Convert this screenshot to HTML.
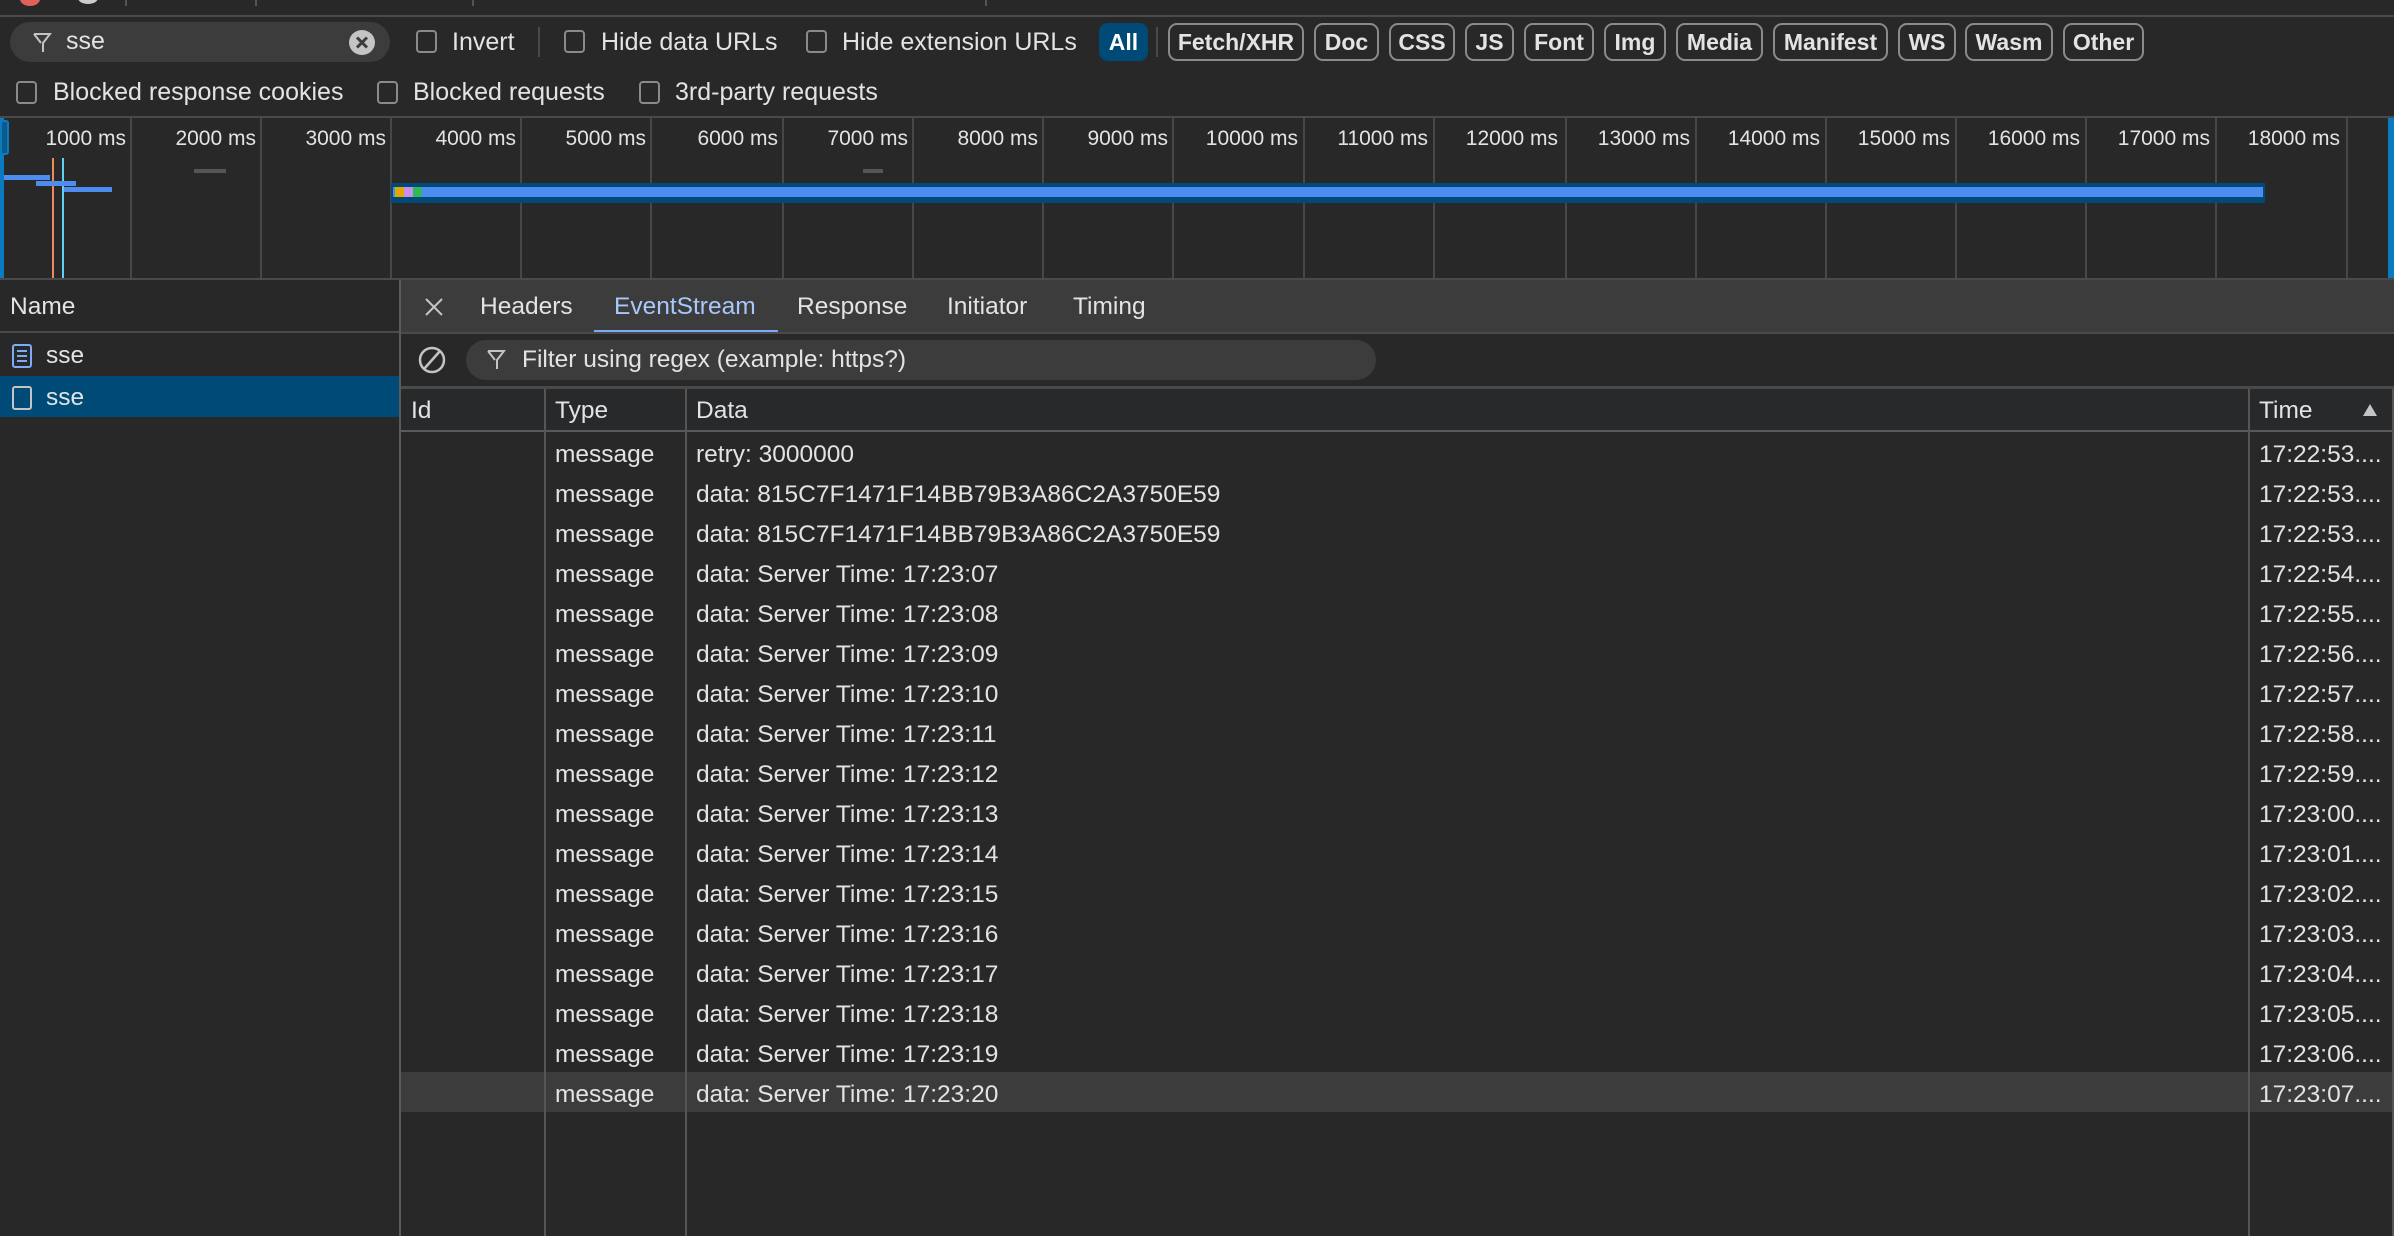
<!DOCTYPE html>
<html><head><meta charset="utf-8">
<style>
*{box-sizing:border-box;margin:0;padding:0}
body{width:2394px;height:1236px;background:#282828;color:#e3e3e3;font-family:"Liberation Sans",Helvetica,Arial,sans-serif;font-size:24.5px;position:relative;overflow:hidden}
.a{position:absolute}
.cb{position:absolute;width:21px;height:23px;border:2px solid #8a8a8a;border-radius:4px}
.t{position:absolute;white-space:nowrap;line-height:1}
.tb{font-size:25px}
.chip{position:absolute;top:23px;height:38px;border:2px solid #8a8a8a;border-radius:9px;font-size:23px;font-weight:bold;color:#e3e3e3;text-align:center;line-height:34px;white-space:nowrap}
.vl{position:absolute;width:2px;background:#474747}
.tick{position:absolute;top:118px;height:160px;width:2px;background:#474747}
.tl{position:absolute;top:127px;font-size:21px;color:#e3e3e3;text-align:right;width:130px;white-space:nowrap}
.row{position:absolute;left:401px;width:1993px;height:40px}
.row span{position:absolute;top:8px;white-space:nowrap}
</style></head><body>
<div class="a" style="left:0;top:0;width:2394px;height:15px;background:#282828"></div>
<div class="a" style="left:20px;top:-8px;width:20px;height:14px;border-radius:50%;background:#e0605a"></div>
<div class="a" style="left:78px;top:-8px;width:20px;height:12px;border-radius:50%;background:#ccc"></div>
<div class="a" style="left:125px;top:0;width:2px;height:6px;background:#555"></div>
<div class="a" style="left:255px;top:0;width:2px;height:6px;background:#555"></div>
<div class="a" style="left:472px;top:0;width:2px;height:6px;background:#555"></div>
<div class="a" style="left:985px;top:0;width:2px;height:6px;background:#555"></div>
<div class="a" style="left:0;top:15px;width:2394px;height:2px;background:#4a4a4a"></div>

<div class="a" style="left:10px;top:22px;width:380px;height:40px;border-radius:20px;background:#3c3c3c"></div>
<svg class="a" style="left:32px;top:32px" width="20" height="22" viewBox="0 0 20 22"><path d="M2 2h16L11 11v9M9 11L2 2" fill="none" stroke="#c4c4c4" stroke-width="2"/></svg>
<div class="t" style="left:66px;top:29px;font-size:25px">sse</div>
<div class="a" style="left:349px;top:30px;width:26px;height:25px;border-radius:50%;background:#c4c4c4"></div>
<svg class="a" style="left:349px;top:30px" width="26" height="25"><path d="M8 7.5l10 10M18 7.5l-10 10" stroke="#3c3c3c" stroke-width="3"/></svg>

<div class="cb" style="left:416px;top:30px"></div><div class="t tb" style="left:452px;top:30px">Invert</div>
<div class="a" style="left:538px;top:27px;width:2px;height:30px;background:#4a4a4a"></div>
<div class="cb" style="left:564px;top:30px"></div><div class="t tb" style="left:601px;top:30px">Hide data URLs</div>
<div class="cb" style="left:806px;top:30px"></div><div class="t tb" style="left:842px;top:30px">Hide extension URLs</div>
<div class="a" style="left:1099px;top:23px;width:49px;height:38px;border-radius:9px;background:#004a77;color:#fff;font-weight:bold;font-size:23px;text-align:center;line-height:38px">All</div>
<div class="a" style="left:1156px;top:27px;width:2px;height:30px;background:#4a4a4a"></div>
<div class="chip" style="left:1168px;width:136px">Fetch/XHR</div>
<div class="chip" style="left:1314px;width:65px">Doc</div>
<div class="chip" style="left:1389px;width:66px">CSS</div>
<div class="chip" style="left:1465px;width:49px">JS</div>
<div class="chip" style="left:1524px;width:70px">Font</div>
<div class="chip" style="left:1604px;width:62px">Img</div>
<div class="chip" style="left:1676px;width:87px">Media</div>
<div class="chip" style="left:1773px;width:115px">Manifest</div>
<div class="chip" style="left:1898px;width:58px">WS</div>
<div class="chip" style="left:1965px;width:88px">Wasm</div>
<div class="chip" style="left:2063px;width:81px">Other</div>

<div class="cb" style="left:16px;top:81px"></div><div class="t tb" style="left:53px;top:80px">Blocked response cookies</div>
<div class="cb" style="left:377px;top:81px"></div><div class="t tb" style="left:413px;top:80px">Blocked requests</div>
<div class="cb" style="left:639px;top:81px"></div><div class="t tb" style="left:675px;top:80px">3rd-party requests</div>
<div class="a" style="left:0;top:116px;width:2394px;height:2px;background:#4a4a4a"></div>

<div class="a" style="left:0;top:118px;width:4px;height:160px;background:#0b7bbf"></div>
<div class="a" style="left:0;top:120px;width:9px;height:35px;border-radius:3px;background:#0a5a8c;border:2px solid #0b7bbf"></div>
<div class="a" style="left:2388px;top:118px;width:6px;height:160px;background:#0b7bbf"></div>
<div class="tick" style="left:130px"></div><div class="tick" style="left:260px"></div><div class="tick" style="left:390px"></div><div class="tick" style="left:520px"></div><div class="tick" style="left:650px"></div><div class="tick" style="left:782px"></div><div class="tick" style="left:912px"></div><div class="tick" style="left:1042px"></div><div class="tick" style="left:1172px"></div><div class="tick" style="left:1303px"></div><div class="tick" style="left:1433px"></div><div class="tick" style="left:1565px"></div><div class="tick" style="left:1695px"></div><div class="tick" style="left:1825px"></div><div class="tick" style="left:1955px"></div><div class="tick" style="left:2085px"></div><div class="tick" style="left:2215px"></div><div class="tick" style="left:2346px"></div>
<div class="tl" style="left:-4px">1000 ms</div><div class="tl" style="left:126px">2000 ms</div><div class="tl" style="left:256px">3000 ms</div><div class="tl" style="left:386px">4000 ms</div><div class="tl" style="left:516px">5000 ms</div><div class="tl" style="left:648px">6000 ms</div><div class="tl" style="left:778px">7000 ms</div><div class="tl" style="left:908px">8000 ms</div><div class="tl" style="left:1038px">9000 ms</div><div class="tl" style="left:1168px">10000 ms</div><div class="tl" style="left:1298px">11000 ms</div><div class="tl" style="left:1428px">12000 ms</div><div class="tl" style="left:1560px">13000 ms</div><div class="tl" style="left:1690px">14000 ms</div><div class="tl" style="left:1820px">15000 ms</div><div class="tl" style="left:1950px">16000 ms</div><div class="tl" style="left:2080px">17000 ms</div><div class="tl" style="left:2210px">18000 ms</div>
<div class="a" style="left:52px;top:158px;width:2px;height:120px;background:#f08a5d"></div>
<div class="a" style="left:62px;top:158px;width:2px;height:120px;background:#5ed1f5"></div>
<div class="a" style="left:4px;top:175px;width:46px;height:5px;background:#4f8cf0"></div>
<div class="a" style="left:36px;top:181px;width:40px;height:5px;background:#4f8cf0"></div>
<div class="a" style="left:64px;top:187px;width:48px;height:5px;background:#4f8cf0"></div>
<div class="a" style="left:194px;top:169px;width:32px;height:4px;background:#555"></div>
<div class="a" style="left:863px;top:169px;width:20px;height:4px;background:#555"></div>
<div class="a" style="left:391px;top:183px;width:1874px;height:20px;background:#004a77"></div>
<div class="a" style="left:393px;top:187px;width:1870px;height:10px;background:#4f8cf0"></div>
<div class="a" style="left:395px;top:187px;width:9px;height:10px;background:#e0a800"></div>
<div class="a" style="left:404px;top:187px;width:9px;height:10px;background:#c88ef0"></div>
<div class="a" style="left:413px;top:187px;width:9px;height:10px;background:#33b859"></div>
<div class="a" style="left:0;top:278px;width:2394px;height:2px;background:#4a4a4a"></div>

<div class="t" style="left:10px;top:295px">Name</div>
<div class="a" style="left:0;top:331px;width:399px;height:2px;background:#4a4a4a"></div>
<svg class="a" style="left:12px;top:344px" width="20" height="24"><rect x="1" y="1" width="18" height="22" rx="2" fill="none" stroke="#7cacf8" stroke-width="2"/><path d="M5 7h10M5 12h10M5 17h10" stroke="#7cacf8" stroke-width="2"/></svg>
<div class="t" style="left:46px;top:344px">sse</div>
<div class="a" style="left:0;top:376px;width:399px;height:41px;background:#004a77"></div>
<svg class="a" style="left:12px;top:386px" width="20" height="24"><rect x="1" y="1" width="18" height="22" rx="2" fill="none" stroke="#c4c4c4" stroke-width="2"/></svg>
<div class="t" style="left:46px;top:386px">sse</div>
<div class="a" style="left:399px;top:280px;width:2px;height:956px;background:#5a5a5a"></div>

<div class="a" style="left:401px;top:280px;width:1993px;height:52px;background:#3c3c3c"></div>
<svg class="a" style="left:423px;top:296px" width="22" height="22"><path d="M3 3l16 16M19 3L3 19" stroke="#c4c4c4" stroke-width="2"/></svg>
<div class="t" style="left:480px;top:295px">Headers</div>
<div class="t" style="left:614px;top:295px;color:#a8c7fa">EventStream</div>
<div class="a" style="left:594px;top:330px;width:184px;height:3px;background:#7cacf8"></div>
<div class="t" style="left:797px;top:295px">Response</div>
<div class="t" style="left:947px;top:295px">Initiator</div>
<div class="t" style="left:1073px;top:295px">Timing</div>
<div class="a" style="left:401px;top:332px;width:1993px;height:2px;background:#4a4a4a"></div>
<svg class="a" style="left:417px;top:344px" width="30" height="32"><circle cx="15" cy="16" r="12" fill="none" stroke="#c4c4c4" stroke-width="2.5"/><path d="M7 25L23 7" stroke="#c4c4c4" stroke-width="2.5"/></svg>
<div class="a" style="left:466px;top:340px;width:910px;height:40px;border-radius:20px;background:#3c3c3c"></div>
<svg class="a" style="left:486px;top:349px" width="20" height="22" viewBox="0 0 20 22"><path d="M2 2h16L11 11v9M9 11L2 2" fill="none" stroke="#c4c4c4" stroke-width="2"/></svg>
<div class="t" style="left:522px;top:348px">Filter using regex (example: https?)</div>
<div class="a" style="left:401px;top:386px;width:1993px;height:3px;background:#4a4a4a"></div>

<div class="a" style="left:401px;top:389px;width:1993px;height:847px;background:#282828"></div>
<div class="a" style="left:401px;top:389px;width:1993px;height:42px;background:#28292b"></div>
<div class="a" style="left:401px;top:430px;width:1993px;height:2px;background:#5a5a5a"></div>
<div class="t" style="left:411px;top:399px">Id</div>
<div class="t" style="left:555px;top:399px">Type</div>
<div class="t" style="left:696px;top:399px">Data</div>
<div class="t" style="left:2259px;top:399px">Time</div>
<svg class="a" style="left:2362px;top:403px" width="16" height="14"><path d="M8 1L15 13H1z" fill="#c4c4c4"/></svg>

<div class="row" style="top:1072px;background:#3c3c3c"></div>
<div class="vl" style="left:544px;top:389px;height:847px;background:#555"></div>
<div class="vl" style="left:685px;top:389px;height:847px;background:#555"></div>
<div class="vl" style="left:2248px;top:389px;height:847px;background:#555"></div>
<div class="vl" style="left:2392px;top:389px;height:847px;background:#555"></div>

<div style="position:absolute;left:0;top:433px;width:2394px">
<div class="row" style="top:0;left:0"><span style="left:555px">message</span><span style="left:696px">retry: 3000000</span><span style="left:2259px">17:22:53....</span></div>
<div class="row" style="top:40px;left:0"><span style="left:555px">message</span><span style="left:696px">data: 815C7F1471F14BB79B3A86C2A3750E59</span><span style="left:2259px">17:22:53....</span></div>
<div class="row" style="top:80px;left:0"><span style="left:555px">message</span><span style="left:696px">data: 815C7F1471F14BB79B3A86C2A3750E59</span><span style="left:2259px">17:22:53....</span></div>
<div class="row" style="top:120px;left:0"><span style="left:555px">message</span><span style="left:696px">data: Server Time: 17:23:07</span><span style="left:2259px">17:22:54....</span></div>
<div class="row" style="top:160px;left:0"><span style="left:555px">message</span><span style="left:696px">data: Server Time: 17:23:08</span><span style="left:2259px">17:22:55....</span></div>
<div class="row" style="top:200px;left:0"><span style="left:555px">message</span><span style="left:696px">data: Server Time: 17:23:09</span><span style="left:2259px">17:22:56....</span></div>
<div class="row" style="top:240px;left:0"><span style="left:555px">message</span><span style="left:696px">data: Server Time: 17:23:10</span><span style="left:2259px">17:22:57....</span></div>
<div class="row" style="top:280px;left:0"><span style="left:555px">message</span><span style="left:696px">data: Server Time: 17:23:11</span><span style="left:2259px">17:22:58....</span></div>
<div class="row" style="top:320px;left:0"><span style="left:555px">message</span><span style="left:696px">data: Server Time: 17:23:12</span><span style="left:2259px">17:22:59....</span></div>
<div class="row" style="top:360px;left:0"><span style="left:555px">message</span><span style="left:696px">data: Server Time: 17:23:13</span><span style="left:2259px">17:23:00....</span></div>
<div class="row" style="top:400px;left:0"><span style="left:555px">message</span><span style="left:696px">data: Server Time: 17:23:14</span><span style="left:2259px">17:23:01....</span></div>
<div class="row" style="top:440px;left:0"><span style="left:555px">message</span><span style="left:696px">data: Server Time: 17:23:15</span><span style="left:2259px">17:23:02....</span></div>
<div class="row" style="top:480px;left:0"><span style="left:555px">message</span><span style="left:696px">data: Server Time: 17:23:16</span><span style="left:2259px">17:23:03....</span></div>
<div class="row" style="top:520px;left:0"><span style="left:555px">message</span><span style="left:696px">data: Server Time: 17:23:17</span><span style="left:2259px">17:23:04....</span></div>
<div class="row" style="top:560px;left:0"><span style="left:555px">message</span><span style="left:696px">data: Server Time: 17:23:18</span><span style="left:2259px">17:23:05....</span></div>
<div class="row" style="top:600px;left:0"><span style="left:555px">message</span><span style="left:696px">data: Server Time: 17:23:19</span><span style="left:2259px">17:23:06....</span></div>
<div class="row" style="top:640px;left:0"><span style="left:555px">message</span><span style="left:696px">data: Server Time: 17:23:20</span><span style="left:2259px">17:23:07....</span></div>
</div>
</body></html>
